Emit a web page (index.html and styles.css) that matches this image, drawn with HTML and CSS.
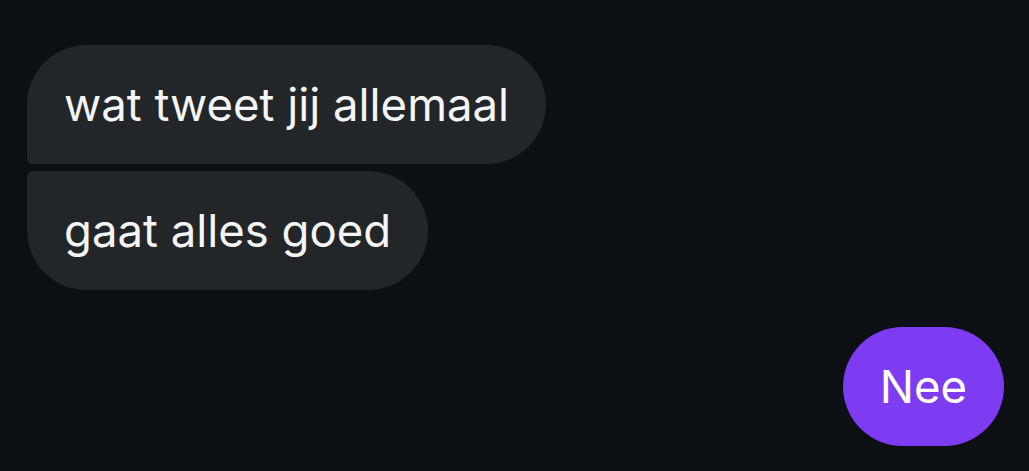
FILE: index.html
```html
<!DOCTYPE html>
<html>
<head>
    <title>Chat</title>
    <link rel="stylesheet" href="styles.css">
</head>
<body>
    <div class="thread">
        <div class="group incoming">
            <div class="bubble first">wat tweet jij allemaal</div>
            <div class="bubble last">gaat alles goed</div>
        </div>
        <div class="group outgoing">
            <div class="bubble">Nee</div>
        </div>
    </div>
</body>
</html>
```

FILE: styles.css
```css
body {
    margin: 0;
    background: #0c0f13;
    font-family: Inter, "Noto Sans", sans-serif;
    color: #f4f5f6;
}
.thread {
    padding: 45px 25px 0 27px;
    display: flex;
    flex-direction: column;
    gap: 37px;
}
.group {
    display: flex;
    flex-direction: column;
    gap: 7px;
}
.incoming {
    align-items: flex-start;
}
.outgoing {
    align-items: flex-end;
}
.bubble {
    font-size: 45.5px;
    line-height: 119px;
    height: 119px;
    padding: 0 37px;
    border-radius: 60px;
    box-sizing: border-box;
}
.incoming .bubble {
    background: #232629;
}
.incoming .first {
    border-bottom-left-radius: 6px;
}
.incoming .last {
    border-top-left-radius: 6px;
}
.outgoing .bubble {
    background: #7d3bf2;
    color: #fff;
}
```
